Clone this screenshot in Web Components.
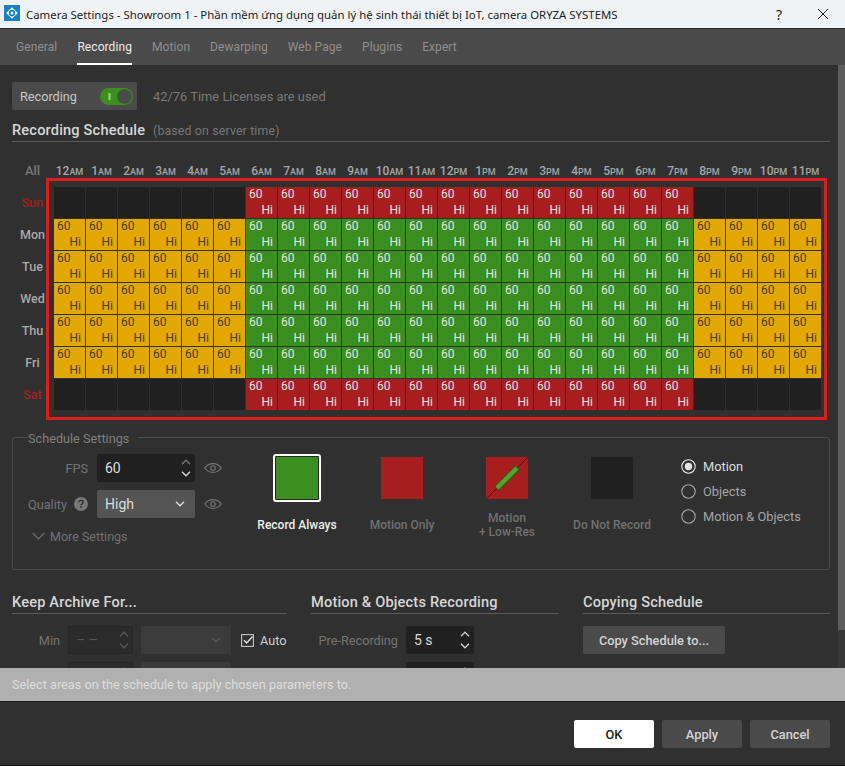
<!DOCTYPE html>
<html lang="en">
<head>
<meta charset="utf-8">
<title>Camera Settings</title>
<style>
  html, body { margin: 0; height: 100%; background: #303030; overflow: hidden; }
  body { font-family: Roboto, "Liberation Sans", sans-serif; }
</style>
</head>
<body>
<cam-dialog></cam-dialog>
<script>
const CHEVRON = (color, up) => `<svg width="10" height="6" viewBox="0 0 10 6" fill="none" stroke="${color}" stroke-width="1.3"><path d="${up ? "M1 5.2 5 1.2l4 4" : "M1 .8l4 4 4-4"}"/></svg>`;
const EYE = `<svg width="18" height="10" viewBox="0 0 18 10" fill="none" stroke="#777" stroke-width="1.1"><path d="M.7 5C3 2 5.8.6 9 .6s6 1.4 8.3 4.4C15 8 12.200 9.400 9 9.400S3 8 .7 5z"/><circle cx="9" cy="5" r="2.300"/></svg>`;

class CamTitlebar extends HTMLElement {
  constructor() {
    super();
    this.attachShadow({ mode: "open" }).innerHTML = `
      <style>
        :host { display: flex; align-items: center; height: 28px; flex: none; background: #f0f3f5; color: #1c1c1c; border-bottom: 1px solid #2a2a2a; font: 11.400px "Noto Sans", "Open Sans", sans-serif; }
        svg.logo { margin: 0 0 2px 4px; flex: none; }
        .name { margin-left: 6px; white-space: nowrap; flex: 1; }
        .help { width: 12px; margin-right: 33px; font-size: 14px; text-align: center; }
        .close { margin-right: 17px; display: flex; }
      </style>
      <svg class="logo" width="16" height="16" viewBox="0 0 16 16"><rect width="16" height="16" fill="#1481c9"/><path d="M8 2.200 13.800 8 8 13.800 2.200 8z" fill="#fff"/><circle cx="8" cy="8" r="3.200" fill="#1481c9"/><circle cx="8" cy="8" r="1.500" fill="#fff"/></svg>
      <span class="name"><slot></slot></span>
      <span class="help">?</span>
      <span class="close"><svg width="10" height="10" viewBox="0 0 10 10" stroke="#222" stroke-width="1" fill="none"><path d="M0 0l10 10M10 0 0 10"/></svg></span>`;
  }
}

class CamTabs extends HTMLElement {
  static get observedAttributes() {
    return ["active"];
  }

  constructor() {
    super();
    this.shadow = this.attachShadow({ mode: "open" });
    this.render();
  }

  attributeChangedCallback() {
    this.render();
  }

  render() {
    const active = this.getAttribute("active");
    const tabs = ["General", "Recording", "Motion", "Dewarping", "Web Page", "Plugins", "Expert"];
    this.shadow.innerHTML = `
      <style>
        :host { display: flex; flex: none; height: 36px; padding-left: 6px; background: #4a4a4a; font-size: 12px; letter-spacing: .08px; }
        span { padding: 0 10px; line-height: 36px; color: #8f8f8f; position: relative; }
        span.on { color: #ececec; }
        span.on::after { content: ""; position: absolute; left: 10px; right: 10px; bottom: 0; height: 2px; background: #fff; }
      </style>
      ${tabs.map((t) => `<span class="${t === active ? "on" : ""}">${t}</span>`).join("")}`;
  }
}

class CamToggle extends HTMLElement {
  constructor() {
    super();
    this.attachShadow({ mode: "open" }).innerHTML = `
      <style>
        :host { display: flex; align-items: center; width: 125px; height: 28px; box-sizing: border-box; padding: 0 4px 0 8px; background: #4a4a4a; border-radius: 2px; color: #c8c8c8; font-size: 12.700px; }
        span { flex: 1; }
        svg { display: block; }
      </style>
      <span><slot></slot></span>
      <svg width="33" height="17" viewBox="0 0 33 17"><rect width="33" height="17" rx="8.500" fill="#3a8f1e"/><rect x="8.500" y="5" width="2" height="7" fill="#9ad07f"/><circle cx="24.500" cy="8.500" r="7.300" fill="#4a4a4a"/></svg>`;
  }
}

class CamHeading extends HTMLElement {
  constructor() {
    super();
    this.attachShadow({ mode: "open" }).innerHTML = `
      <style>
        :host { display: block; height: 20px; line-height: 18px; border-bottom: 1px solid #5a5a5a; color: #d6d6d6; font-size: 14.600px; font-weight: 500; letter-spacing: .17px; white-space: nowrap; }
        ::slotted(small) { margin-left: 4px; color: #777; font-size: 12.300px; font-weight: 400; }
      </style>
      <slot></slot>`;
  }
}

class CamSchedule extends HTMLElement {
  constructor() {
    super();
    const hours = [];
    for (let i = 0; i < 24; i++) {
      const h = i % 12 === 0 ? 12 : i % 12;
      hours.push(`<div class="hour">${h}<small>${i < 12 ? "AM" : "PM"}</small></div>`);
    }
    const days = ["Sun", "Mon", "Tue", "Wed", "Thu", "Fri", "Sat"];
    const rows = days.map((day, d) => {
      const weekend = d === 0 || d === 6;
      let cells = "";
      for (let h = 0; h < 24; h++) {
        const work = h >= 6 && h < 20;
        if (weekend && !work) cells += `<div class="cell off"></div>`;
        else cells += `<div class="cell ${weekend ? "red" : work ? "green" : "yellow"}"><span>60</span><span class="q">Hi</span></div>`;
      }
      return `<div class="day ${weekend ? "end" : ""}">${day}</div>${cells}`;
    });
    this.attachShadow({ mode: "open" }).innerHTML = `
      <style>
        :host { display: block; position: relative; }
        .grid { display: grid; grid-template-columns: 41px repeat(24, 31px); grid-template-rows: 24px repeat(7, 31px); gap: 1px; }
        .all { color: #777; font-size: 13px; font-weight: 500; text-align: center; line-height: 18px; }
        .hour { color: #a5a5a5; font-size: 12px; font-weight: 500; text-align: center; line-height: 18px; white-space: nowrap; margin: 0 -1px; }
        .hour small { font-size: 9px; }
        .day { color: #a8a8a8; font-size: 12.500px; font-weight: 500; text-align: center; line-height: 31px; }
        .day.end { color: #a51e1e; }
        .cell { display: flex; flex-direction: column; justify-content: space-between; box-sizing: border-box; padding: 0 4px 0 3px; font-size: 12px; line-height: 15px; }
        .q { text-align: right; }
        .off { background: #202020; }
        .red { background: #a81e1e; color: #e2e2e2; }
        .green { background: #3a8f1e; color: #e6e6e6; }
        .yellow { background: #e0a800; color: #4a3a08; }
        .mark { position: absolute; left: 34px; top: 16px; width: 781px; height: 242px; box-sizing: border-box; border: 3px solid #dd1c1c; pointer-events: none; }
      </style>
      <div class="grid"><div class="all">All</div>${hours.join("")}${rows.join("")}</div>
      <div class="mark"></div>`;
  }
}

class CamSpin extends HTMLElement {
  constructor() {
    super();
    const off = this.hasAttribute("disabled");
    const up = off ? "#555" : this.getAttribute("up") || "#c8c8c8";
    const down = off ? "#555" : "#d8d8d8";
    this.attachShadow({ mode: "open" }).innerHTML = `
      <style>
        :host { display: flex; align-items: center; box-sizing: border-box; height: 28px; padding: 0 4px 0 8px; border-radius: 2px; background: ${off ? "#2b2b2b" : "#202020"}; color: ${off ? "#565656" : "#dcdcdc"}; font-size: 14px; ${off ? "box-shadow: inset 0 0 0 1px #262626;" : ""} }
        span { flex: 1; }
        div { display: flex; flex-direction: column; gap: 6px; }
        svg { display: block; }
      </style>
      <span><slot></slot></span>
      <div>${CHEVRON(up, true)}${CHEVRON(down, false)}</div>`;
  }
}

class CamCombo extends HTMLElement {
  constructor() {
    super();
    const off = this.hasAttribute("disabled");
    this.attachShadow({ mode: "open" }).innerHTML = `
      <style>
        :host { display: flex; align-items: center; box-sizing: border-box; height: 28px; padding: 0 10px 0 8px; border-radius: 2px; background: ${off ? "#3b3b3b" : "#545454"}; color: #dcdcdc; font-size: 14px; }
        span { flex: 1; }
      </style>
      <span><slot></slot></span>${CHEVRON(off ? "#5c5c5c" : "#e0e0e0", false)}`;
  }
}

class CamSwatch extends HTMLElement {
  constructor() {
    super();
    const kind = this.getAttribute("kind");
    const art = {
      always: `<div class="box sel"></div>`,
      motion: `<div class="box" style="background:#a81e1e"></div>`,
      low: `<svg width="42" height="42" viewBox="0 0 42 42"><rect width="42" height="42" fill="#a81e1e"/><path d="M0 42 42 0" stroke="#5c1212" stroke-width="1"/><path d="M10.500 31.500 31.500 10.500" stroke="#2c5a18" stroke-width="6.500"/><path d="M11 31 31 11" stroke="#4fa528" stroke-width="4.500"/></svg>`,
      none: `<div class="box" style="background:#202020"></div>`
    }[kind];
    this.attachShadow({ mode: "open" }).innerHTML = `
      <style>
        :host { display: flex; flex-direction: column; align-items: center; width: 105px; color: #707070; font-size: 12px; font-weight: 500; line-height: 14px; text-align: center; }
        :host([selected]) { color: #eee; }
        .art { height: 48px; display: flex; align-items: center; justify-content: center; }
        .box { width: 42px; height: 42px; }
        .sel { width: 44px; height: 44px; background: #3a8f1e; border: 2px solid #fff; outline: none; box-shadow: inset 0 0 0 1px #262626; border-radius: 3px; }
        .text { height: 28px; margin-top: 9px; display: flex; align-items: center; }
        svg { display: block; }
      </style>
      <div class="art">${art}</div>
      <div class="text"><div><slot></slot></div></div>`;
  }
}

class CamRadio extends HTMLElement {
  constructor() {
    super();
    const on = this.hasAttribute("checked");
    this.attachShadow({ mode: "open" }).innerHTML = `
      <style>
        :host { display: flex; align-items: center; gap: 7px; height: 25px; color: ${on ? "#dedede" : "#a5a5a5"}; font-size: 12.800px; white-space: nowrap; }
        svg { display: block; flex: none; }
      </style>
      <svg width="15" height="15" viewBox="0 0 15 15"><circle cx="7.500" cy="7.500" r="6.700" fill="none" stroke="${on ? "#e6e6e6" : "#a5a5a5"}" stroke-width="1.100"/>${on ? `<circle cx="7.500" cy="7.500" r="3.700" fill="#e6e6e6"/>` : ""}</svg>
      <slot></slot>`;
  }
}

class CamButton extends HTMLElement {
  constructor() {
    super();
    this.attachShadow({ mode: "open" }).innerHTML = `
      <style>
        :host { display: flex; align-items: center; justify-content: center; box-sizing: border-box; height: 28px; border-radius: 2px; background: #4a4a4a; color: #d4d4d4; font-size: 12.800px; font-weight: 500; }
        :host([primary]) { background: #fff; color: #1c1c1c; }
      </style>
      <slot></slot>`;
  }
}

class CamScheduleSettings extends HTMLElement {
  constructor() {
    super();
    this.attachShadow({ mode: "open" }).innerHTML = `
      <style>
        :host { display: block; }
        fieldset { margin: 0; padding: 10px 0 0 15px; height: 140px; box-sizing: border-box; border: 1px solid #4c4c4c; border-radius: 3px; display: flex; min-width: 0; }
        legend { margin-left: 0; padding: 0 9px 0 0; height: 14px; line-height: 17px; color: #7f7f7f; font-size: 12.700px; }
        .inner { display: flex; }
        .left { width: 216.500px; display: grid; grid-template-columns: 60px 98px 18px; grid-auto-rows: 28px; column-gap: 9px; row-gap: 8px; align-content: start; align-items: center; }
        .label { color: #747474; font-size: 12.700px; text-align: right; white-space: nowrap; }
        .quality { display: flex; justify-content: space-between; align-items: center; }
        .eye { display: flex; }
        .more { grid-column: 1 / 4; align-self: start; display: flex; align-items: center; gap: 5px; margin-left: 4px; color: #717171; font-size: 12.500px; height: 20px; }
        .swatches { display: flex; }
        .radios { margin: 0 0 0 16.500px; align-self: start; }
        svg { display: block; }
      </style>
      <fieldset>
        <legend>Schedule Settings</legend>
        <div class="inner">
          <div class="left">
            <div class="label">FPS</div><cam-spin up="#777">60</cam-spin><div class="eye">${EYE}</div>
            <div class="label quality">Quality
              <svg width="14" height="14" viewBox="0 0 14 14"><circle cx="7" cy="7" r="7" fill="#777"/><path d="M4.900 5.300C5 4 6 3.400 7.100 3.400c1.200 0 2.100.8 2.100 1.800 0 1.500-2.100 1.500-2.100 3.100" fill="none" stroke="#303030" stroke-width="1.400"/><rect x="6.300" y="9.300" width="1.600" height="1.600" fill="#303030"/></svg>
            </div><cam-combo>High</cam-combo><div class="eye">${EYE}</div>
            <div class="more"><svg width="13" height="8" viewBox="0 0 13 8" fill="none" stroke="#717171" stroke-width="1.200"><path d="M.7 1l5.800 5.800L12.300 1"/></svg>More Settings</div>
          </div>
          <div class="swatches">
            <cam-swatch kind="always" selected>Record Always</cam-swatch>
            <cam-swatch kind="motion">Motion Only</cam-swatch>
            <cam-swatch kind="low">Motion<br>+ Low-Res</cam-swatch>
            <cam-swatch kind="none">Do Not Record</cam-swatch>
          </div>
          <div class="radios">
            <cam-radio checked>Motion</cam-radio>
            <cam-radio>Objects</cam-radio>
            <cam-radio>Motion &amp; Objects</cam-radio>
          </div>
        </div>
      </fieldset>`;
  }
}

class CamBottomPanels extends HTMLElement {
  constructor() {
    super();
    this.attachShadow({ mode: "open" }).innerHTML = `
      <style>
        :host { display: grid; grid-template-columns: 275px 248px 247px; column-gap: 24px; }
        .rows { margin-top: 12px; display: grid; gap: 8px; grid-auto-rows: 28px; }
        .archive { grid-template-columns: 48px 65px 90px auto; column-gap: 8px; align-items: center; }
        .pre { grid-template-columns: 87px 68px; column-gap: 8px; align-items: center; }
        .label { color: #747474; font-size: 12.700px; text-align: right; white-space: nowrap; }
        .auto { display: flex; align-items: center; gap: 6px; margin-left: 2px; color: #cfcfcf; font-size: 12.700px; }
        svg { display: block; }
        .copy { width: 142px; }
      </style>
      <section>
        <cam-heading>Keep Archive For...</cam-heading>
        <div class="rows archive">
          <div class="label">Min</div><cam-spin disabled>– –</cam-spin><cam-combo disabled></cam-combo>
          <div class="auto"><svg width="13" height="13" viewBox="0 0 13 13" fill="none"><rect x=".6" y=".6" width="11.800" height="11.800" stroke="#c8c8c8" stroke-width="1.100"/><path d="M3 6.200 5.700 9 11.500 2.500" stroke="#e0e0e0" stroke-width="1.500"/></svg>Auto</div>
          <div></div><cam-spin disabled></cam-spin><cam-combo disabled></cam-combo>
        </div>
      </section>
      <section>
        <cam-heading>Motion &amp; Objects Recording</cam-heading>
        <div class="rows pre">
          <div class="label">Pre-Recording</div><cam-spin>5 s</cam-spin>
          <div></div><cam-spin></cam-spin>
        </div>
      </section>
      <section>
        <cam-heading>Copying Schedule</cam-heading>
        <div class="rows"><cam-button class="copy">Copy Schedule to...</cam-button></div>
      </section>`;
  }
}

class CamDialog extends HTMLElement {
  constructor() {
    super();
    this.attachShadow({ mode: "open" }).innerHTML = `
      <style>
        :host { display: flex; flex-direction: column; height: 766px; background: #303030; font-family: Roboto, "Liberation Sans", sans-serif; overflow: hidden; }
        .middle { flex: 1; min-height: 0; display: flex; overflow: hidden; }
        .content { flex: 1; min-width: 0; padding: 17px 8px 0 12px; }
        .bar { width: 7px; flex: none; background: #373737; }
        .thumb { height: 565px; background: #5c5c5c; }
        .licence { display: flex; align-items: center; gap: 16px; color: #787878; font-size: 12.900px; }
        .head1 { margin-top: 11px; }
        cam-schedule { margin-top: 20px; }
        cam-schedule-settings { margin-top: 20px; }
        cam-bottom-panels { margin-top: 23px; }
        .hint { flex: none; height: 33px; line-height: 33px; padding-left: 12px; background: #b0b0b0; color: #dedede; font-size: 12.700px; }
        .footer { flex: none; height: 65px; box-sizing: border-box; padding: 18px 15px 0 0; border-top: 1px solid #1c1c1c; border-bottom: 1px solid #111; display: flex; justify-content: flex-end; gap: 8px; }
        .footer cam-button { width: 80px; }
      </style>
      <cam-titlebar>Camera Settings - Showroom 1 - Phần mềm ứng dụng quản lý hệ sinh thái thiết bị IoT, camera ORYZA SYSTEMS</cam-titlebar>
      <cam-tabs active="Recording"></cam-tabs>
      <div class="middle">
        <div class="content">
          <div class="licence"><cam-toggle>Recording</cam-toggle><span>42/76 Time Licenses are used</span></div>
          <cam-heading class="head1">Recording Schedule <small>(based on server time)</small></cam-heading>
          <cam-schedule></cam-schedule>
          <cam-schedule-settings></cam-schedule-settings>
          <cam-bottom-panels></cam-bottom-panels>
        </div>
        <div class="bar"><div class="thumb"></div></div>
      </div>
      <div class="hint">Select areas on the schedule to apply chosen parameters to.</div>
      <div class="footer">
        <cam-button primary>OK</cam-button>
        <cam-button>Apply</cam-button>
        <cam-button>Cancel</cam-button>
      </div>`;
  }
}

customElements.define("cam-titlebar", CamTitlebar);
customElements.define("cam-tabs", CamTabs);
customElements.define("cam-toggle", CamToggle);
customElements.define("cam-heading", CamHeading);
customElements.define("cam-schedule", CamSchedule);
customElements.define("cam-spin", CamSpin);
customElements.define("cam-combo", CamCombo);
customElements.define("cam-swatch", CamSwatch);
customElements.define("cam-radio", CamRadio);
customElements.define("cam-button", CamButton);
customElements.define("cam-schedule-settings", CamScheduleSettings);
customElements.define("cam-bottom-panels", CamBottomPanels);
customElements.define("cam-dialog", CamDialog);
</script>
</body>
</html>
